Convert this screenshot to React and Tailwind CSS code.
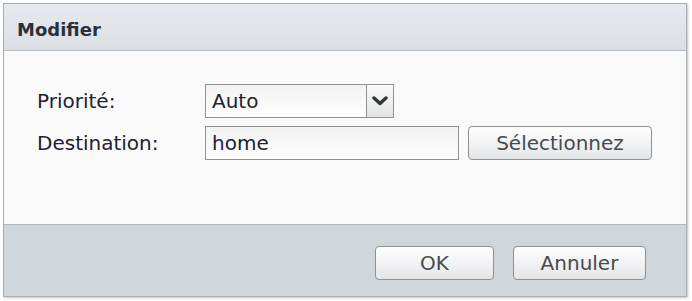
import React from 'react';

const font = { fontFamily: '"DejaVu Sans", Verdana, sans-serif' };

const Button = ({ children, className }) => (
  <button
    className={`h-[34px] rounded-[4px] border border-[#8e9092] bg-gradient-to-b from-[#ffffff] to-[#e4e6e8] text-[20px] text-[#4a4a4a] leading-none ${className}`}
  >
    {children}
  </button>
);

const App = () => {
  return (
    <div className="w-[692px] h-[301px] bg-white pt-[3px] pl-[3px]" style={font}>
      <div className="w-[684px] h-[294px] flex flex-col border border-[#a9aeb3] shadow-[1px_1px_2px_rgba(0,0,0,0.25)]">
        {/* En-tête */}
        <div className="h-[47px] flex items-center pl-[13px] pt-[5px] border-b border-[#b9bec3] bg-gradient-to-b from-[#e6e9ed] to-[#dce0e5]">
          <span className="text-[18px] font-bold text-[#2f2f3b]">Modifier</span>
        </div>

        {/* Formulaire */}
        <div className="h-[173px] bg-[#fafafa] pt-[33px] pl-[33px] flex flex-col gap-[8px]">
          <div className="flex items-center h-[34px]">
            <span className="w-[168px] text-[20px] text-[#22222e]">Priorité:</span>
            <div className="w-[189px] h-[34px] flex border border-[#8f9193] bg-white">
              <div className="flex-1 flex items-center pl-[6px] text-[20px] text-[#22222e] bg-gradient-to-b from-[#f2f2f2] to-white">Auto</div>
              <div className="w-[27px] flex items-center justify-center border-l border-[#8f9193] bg-gradient-to-b from-[#fafafa] to-[#e2e4e6]">
                <svg width="16" height="10" viewBox="0 0 16 10">
                  <polyline points="2,2 8,7.5 14,2" fill="none" stroke="#333333" strokeWidth="3.4" strokeLinejoin="round" strokeLinecap="round" />
                </svg>
              </div>
            </div>
          </div>
          <div className="flex items-center h-[34px]">
            <span className="w-[168px] text-[20px] text-[#22222e]">Destination:</span>
            <div className="w-[254px] h-[34px] flex items-center pl-[6px] border border-[#8f9193] bg-gradient-to-b from-[#f2f2f2] to-white text-[20px] text-[#22222e]">
              home
            </div>
            <Button className="ml-[9px] w-[184px]">Sélectionnez</Button>
          </div>
        </div>

        {/* Pied */}
        <div className="flex-1 border-t border-[#b3b8bd] bg-[#d1d6db] flex justify-end items-start pt-[21px] pr-[40px] gap-[19px]">
          <Button className="w-[119px]">OK</Button>
          <Button className="w-[133px]">Annuler</Button>
        </div>
      </div>
    </div>
  );
};

export default App;
